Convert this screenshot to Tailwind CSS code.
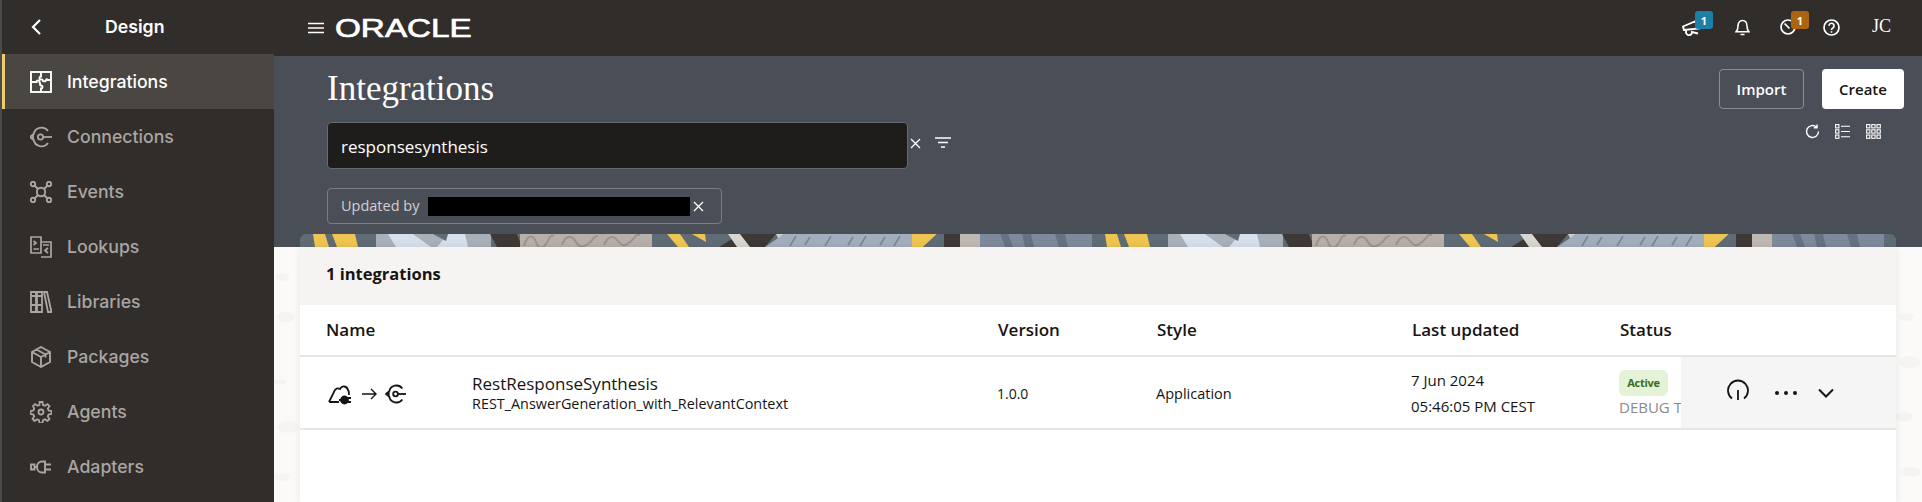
<!DOCTYPE html>
<html lang="en">
<head>
<meta charset="utf-8">
<title>Integrations</title>
<script src="https://cdn.jsdelivr.net/npm/@tailwindcss/browser@4"></script>
</head>
<body class="m-0 overflow-hidden bg-[#fbfaf8]">
<div class="flex h-[502px] w-[1922px] overflow-hidden font-['Open_Sans',sans-serif]">

  <!-- Sidebar -->
  <aside class="w-[274px] shrink-0 bg-[#312d2a] border-l-2 border-[#4a4a4a] font-['Inter',sans-serif] text-[17.7px] text-[#a9a6a3]">
    <div class="flex h-[54px] items-center">
      <svg class="ml-[28px] h-[18px] w-[12px] text-white" viewBox="0 0 12 18" fill="none" stroke="currentColor" stroke-width="2.2"><path d="M10 2 3 9l7 7"/></svg>
      <span class="ml-[63px] font-semibold text-white">Design</span>
    </div>
    <div class="flex h-[55px] items-center border-l-[3px] border-[#f0cc71] bg-[#4a4642] pl-[25px] pt-[1px] font-medium text-white">
      <svg class="h-[22px] w-[22px]" viewBox="0 0 22 22" fill="none" stroke="currentColor" stroke-width="1.900"><rect x="1" y="1" width="20" height="20"/><path d="M1 11h5.500c-.5-2 3.500-2 3 0-.3 1 .5 1.500 1.500 1.500M11 1v4.500c-2 -.3-2 3.500 0 3 1-.3 2 .5 2 1.500 1.500.5 3 .5 3-1 0-1 1-1 1.500 0H21M11 21v-3.500c2 .3 2-3.500 0-3-.8.2-1-.8-1-2"/></svg>
      <span class="ml-[15px]">Integrations</span>
    </div>
    <div class="flex h-[55px] items-center pl-[28px] pt-[1px] font-medium">
      <svg class="h-[22px] w-[22px]" viewBox="0 0 22 22" fill="none" stroke="currentColor" stroke-width="1.800"><path d="M18 5A8 8 0 0 0 3.600 8.500M3.600 13.500A8 8 0 0 0 18 17M0 11l3-2.500v5z"/><circle cx="10.500" cy="11" r="2.600"/><path d="M13 11h9"/></svg>
      <span class="ml-[15px]">Connections</span>
    </div>
    <div class="flex h-[55px] items-center pl-[28px] pt-[1px] font-medium">
      <svg class="h-[22px] w-[22px]" viewBox="0 0 22 22" fill="none" stroke="currentColor" stroke-width="1.900"><circle cx="11" cy="11" r="4.200"/><circle cx="3" cy="3" r="2.200"/><circle cx="19" cy="3" r="2.200"/><circle cx="3" cy="19" r="2.200"/><circle cx="19" cy="19" r="2.200"/><path d="m4.500 4.500 3.500 3.500M17.500 4.500 14 8M4.500 17.500 8 14M17.500 17.500 14 14"/></svg>
      <span class="ml-[15px]">Events</span>
    </div>
    <div class="flex h-[55px] items-center pl-[28px] pt-[1px] font-medium">
      <svg class="h-[22px] w-[22px]" viewBox="0 0 22 22" fill="none" stroke="currentColor" stroke-width="1.700"><path d="M1 1h10v16H1zM11 6h10v15H11"/><path d="m3.500 5 2.500 2-2.500 2M3.500 13H9M13 9h6M18 12l-3 2.500 3 2.500"/></svg>
      <span class="ml-[15px]">Lookups</span>
    </div>
    <div class="flex h-[55px] items-center pl-[28px] pt-[1px] font-medium">
      <svg class="h-[22px] w-[22px]" viewBox="0 0 22 22" fill="none" stroke="currentColor" stroke-width="1.800"><path d="M1 1h5v20H1zM7 1h5v20H7zM14 1l3-.2L21.500 21H18zM1 5h5M1 14h5M7 5h5M7 14h5"/></svg>
      <span class="ml-[15px]">Libraries</span>
    </div>
    <div class="flex h-[55px] items-center pl-[28px] pt-[1px] font-medium">
      <svg class="h-[22px] w-[22px]" viewBox="0 0 22 22" fill="none" stroke="currentColor" stroke-width="1.900"><path d="M11 1 20 6v10l-9 5-9-5V6zM2 6l9 5 9-5M11 11v10M6.500 3.500 15.500 8.500v3"/></svg>
      <span class="ml-[15px]">Packages</span>
    </div>
    <div class="flex h-[55px] items-center pl-[28px] pt-[1px] font-medium">
      <svg class="h-[22px] w-[22px]" viewBox="0 0 22 22" fill="none" stroke="currentColor" stroke-width="1.800"><circle cx="11" cy="11" r="2.500"/><path d="M9.500 1h3l.5 3 2 .8 2.500-1.700 2 2L17.800 7.500l.8 2 3 .5v3l-3 .5-.8 2 1.700 2.500-2 2-2.500-1.700-2 .8-.5 3h-3l-.5-3-2-.8-2.500 1.700-2-2 1.700-2.500-.8-2-3-.5v-3l3-.5.8-2L3 5.100l2-2 2.500 1.700 2-.8z"/></svg>
      <span class="ml-[15px]">Agents</span>
    </div>
    <div class="flex h-[55px] items-center pl-[28px] pt-[1px] font-medium">
      <svg class="h-[22px] w-[22px]" viewBox="0 0 22 22" fill="none" stroke="currentColor" stroke-width="1.900"><path d="M1 8.500h3.500v5H1zM4.500 11H7M7 11c0-3 2-5.500 5-5.500h3v11h-3c-3 0-5-2.500-5-5.500zM15 8.500h6M15 13.500h6"/></svg>
      <span class="ml-[15px]">Adapters</span>
    </div>
  </aside>

  <!-- Main -->
  <main class="relative flex min-w-0 flex-1 flex-col">
    <!-- Faint background texture -->
    <svg class="absolute left-0 top-[247px] h-[255px] w-full" viewBox="0 0 1648 255" fill="#f6f4f1">
      <ellipse cx="8" cy="30" rx="7" ry="4"/><ellipse cx="12" cy="70" rx="9" ry="5"/><ellipse cx="6" cy="135" rx="6" ry="3"/><ellipse cx="14" cy="180" rx="11" ry="6"/><ellipse cx="8" cy="230" rx="8" ry="4"/>
      <ellipse cx="1632" cy="70" rx="8" ry="4"/><ellipse cx="1636" cy="115" rx="11" ry="6"/><ellipse cx="1630" cy="170" rx="9" ry="5"/><ellipse cx="1637" cy="225" rx="10" ry="5"/>
    </svg>

    <!-- Top bar -->
    <header class="relative flex h-[56px] shrink-0 items-center bg-[#312d2a] text-white">
      <svg class="ml-[34px] h-[12px] w-[16px]" viewBox="0 0 16 12" fill="none" stroke="currentColor" stroke-width="1.600"><path d="M0 1.500h16M0 6h16M0 10.500h16"/></svg>
      <span class="ml-[11px] mt-[-1px] block origin-left scale-x-[1.330] font-['Liberation_Sans',sans-serif] text-[25px] leading-[30px] text-white [-webkit-text-stroke:0.7px_white]">ORACLE</span>

      <svg class="absolute left-[1408px] top-[20px] h-[16px] w-[19px]" viewBox="0 0 19 16" fill="none" stroke="currentColor" stroke-width="1.900"><path d="M1 6.500 2 10l15-1.500L14 1zM4.500 10.500a3 3 0 1 0 5.500 1.500l6 1.500"/></svg>
      <span class="absolute left-[1421px] top-[11px] flex h-[18px] w-[18px] items-center justify-center rounded-[3px] bg-[#1d7fa6] text-[11px] font-bold leading-none text-white">1</span>
      <svg class="absolute left-[1461px] top-[19px] h-[17px] w-[15px]" viewBox="0 0 15 17" fill="none" stroke="currentColor" stroke-width="1.600"><path d="M1 12.800h13c-1.500-1.500-2-2.500-2-5.500C12 4 10.500 1.500 7.500 1.500S3 4 3 7.300c0 3-.5 4-2 5.500zM5.500 15.500h4"/></svg>
      <svg class="absolute left-[1506px] top-[19px] h-[16px] w-[16px]" viewBox="0 0 16 16" fill="none" stroke="currentColor" stroke-width="1.700"><circle cx="8" cy="8" r="7"/><path d="m4.500 4.500 5 5"/></svg>
      <span class="absolute left-[1517px] top-[11px] flex h-[18px] w-[18px] items-center justify-center rounded-[3px] bg-[#ad6410] text-[11px] font-bold leading-none text-white">1</span>
      <svg class="absolute left-[1549px] top-[19px] h-[17px] w-[17px]" viewBox="0 0 17 17" fill="none" stroke="currentColor" stroke-width="1.700"><circle cx="8.500" cy="8.500" r="7.500"/><path d="M6 6.800a2.500 2.500 0 1 1 3.800 2.100c-.9.500-1.300 1-1.300 2"/><path d="M8.500 12.200v1.500"/></svg>
      <span class="absolute left-[1598px] top-[13px] font-['Liberation_Serif',serif] text-[18px] leading-[26px] text-white">JC</span>
    </header>

    <!-- Hero -->
    <section class="relative flex h-[191px] shrink-0 flex-col bg-[#4a4e57]">
      <div class="flex h-[178px] justify-between">
        <div class="pl-[53px] pt-[10px]">
          <h1 class="h-[46px] font-['Liberation_Serif',serif] text-[35px] leading-[46px] text-white">Integrations</h1>
          <div class="mt-[10px] flex items-center">
            <div class="flex h-[47px] w-[581px] items-center rounded-[4px] border border-[#66696e] bg-[#1f1d1b] pl-[13px] pt-[2px] text-[17px] text-white">responsesynthesis</div>
            <svg class="ml-[2px] mt-[-5px] h-[11px] w-[11px] text-white" viewBox="0 0 11 11" fill="none" stroke="currentColor" stroke-width="1.300"><path d="m1 1 9 9M10 1l-9 9"/></svg>
            <svg class="ml-[14px] mt-[-5px] h-[12px] w-[16px] text-white" viewBox="0 0 16 12" fill="none" stroke="currentColor" stroke-width="1.400"><path d="M0 1h16M3 5.500h10M6 10h4"/></svg>
          </div>
          <div class="mt-[19px] flex h-[36px] w-[395px] items-center rounded-[4px] border border-[#7b7e84] pl-[13px] text-[14.500px] text-[#cfd0d3]">
            <span class="w-[87px]">Updated by</span>
            <span class="h-[19px] w-[262px] bg-black"></span>
            <svg class="ml-[3px] h-[11px] w-[11px] text-white" viewBox="0 0 11 11" fill="none" stroke="currentColor" stroke-width="1.300"><path d="m1 1 9 9M10 1l-9 9"/></svg>
          </div>
        </div>
        <div class="flex flex-col items-end pr-[18px] pt-[13px]">
          <div class="flex gap-[18px] text-[15px] font-semibold">
            <span class="flex h-[40px] w-[85px] items-center justify-center rounded-[4px] border border-[#8a8d92] text-white">Import</span>
            <span class="flex h-[40px] w-[82px] items-center justify-center rounded-[4px] bg-white text-[#161513]">Create</span>
          </div>
          <div class="mr-[23px] mt-[15px] flex items-center text-white">
            <svg class="h-[15px] w-[15px]" viewBox="0 0 15 15" fill="none" stroke="currentColor" stroke-width="1.400"><path d="M13.500 7.500a6 6 0 1 1-2-4.500M12 .5v3.200H8.800"/></svg>
            <svg class="ml-[15px] h-[15px] w-[15px]" viewBox="0 0 15 15" fill="none" stroke="currentColor" stroke-width="1.100"><rect x=".6" y=".6" width="3.300" height="3.300"/><rect x=".6" y="5.800" width="3.300" height="3.300"/><rect x=".6" y="11" width="3.300" height="3.300"/><path d="M6 2.200h9M6 7.500h9M6 12.700h9"/></svg>
            <svg class="ml-[16px] h-[15px] w-[15px]" viewBox="0 0 15 15" fill="none" stroke="currentColor" stroke-width="1.100"><rect x=".6" y=".6" width="3.300" height="3.300"/><rect x="5.800" y=".6" width="3.300" height="3.300"/><rect x="11" y=".6" width="3.300" height="3.300"/><rect x=".6" y="5.800" width="3.300" height="3.300"/><rect x="5.800" y="5.800" width="3.300" height="3.300"/><rect x="11" y="5.800" width="3.300" height="3.300"/><rect x=".6" y="11" width="3.300" height="3.300"/><rect x="5.800" y="11" width="3.300" height="3.300"/><rect x="11" y="11" width="3.300" height="3.300"/></svg>
          </div>
        </div>
      </div>
      <!-- Decorative strip -->
      <svg class="mx-[26px] h-[13px] w-[1596px] rounded-t-[6px]" viewBox="0 0 1596 13" preserveAspectRatio="none">
        <defs>
          <pattern id="strip" width="792" height="13" patternUnits="userSpaceOnUse">
            <rect width="792" height="13" fill="#5f6c76"/>
            <path d="M13 0h12l4 13H15zM32 0h23l3 13H37z" fill="#eec550"/>
            <rect x="76" width="115" height="13" fill="#a9b0b9"/>
            <path d="M88 0h25l18 13H96zM148 0h17l3 13h-31z" fill="#d6dfeb"/>
            <path d="M133 0h15l-2 7z" fill="#5f6c76"/>
            <path d="M190 0h27l5 13h-25z" fill="#3e3936"/>
            <rect x="220" width="132" height="13" fill="#b6b0a9"/>
            <path d="M224 12c4-14 10-10 12-4s6 8 10 2 4-10 8-8M262 11c5-13 11-8 14-3s6 6 12 2 6-9 10-8M304 11c5-11 10-9 14-4s6 6 12 1 5-8 10-7" fill="none" stroke="#9a948e" stroke-width="2"/>
            <path d="M367 0h13l9 13h-11zM392 0h13l1 8z" fill="#eec550"/>
            <path d="M440 0h36l-11 13h-46z" fill="#3e3936"/>
            <path d="M428 0h12l10 13h-13z" fill="#d9d6d0"/>
            <path d="M476 0h8l-5 6z" fill="#cfccc6"/>
            <path d="M484 0h128v13H465z" fill="#a2aebd"/>
            <path d="M490 12l6-10M505 11l5-8M525 12l6-10M548 11l5-8M560 12l6-10M580 11l5-8M594 12l6-10" stroke="#7a8594" stroke-width="1.500" fill="none"/>
            <path d="M612 0h25l-14 13h-11z" fill="#eec550"/>
            <path d="M637 0h7v13h-21z" fill="#5f6c76"/>
            <rect x="644" width="16" height="13" fill="#3e3936"/>
            <rect x="660" width="20" height="13" fill="#bdb8b1"/>
            <rect x="680" width="112" height="13" fill="#7e8a9c"/>
            <path d="M700 0h8l5 13h-8zM722 0h9l3 13h-9zM755 0h10l3 13h-9z" fill="#66727f"/>
          </pattern>
        </defs>
        <rect width="1596" height="13" fill="url(#strip)"/>
      </svg>
    </section>

    <!-- Card -->
    <section class="relative mx-[26px] flex-1 shadow-[0_0_8px_rgba(0,0,0,0.08)]">
      <div class="flex h-[58px] items-center bg-[#f5f4f2] pb-[3px] pl-[26px] text-[16.500px] font-bold text-[#161513]">1 integrations</div>
      <div class="h-full bg-white text-[#161513]">
        <div class="grid h-[52px] grid-cols-[698px_159px_255px_208px_1fr] items-center border-b-2 border-[#e7e6e4] text-[17px] font-semibold">
          <span class="pl-[26px]">Name</span><span>Version</span><span>Style</span><span>Last updated</span><span>Status</span>
        </div>
        <div class="relative grid h-[73px] grid-cols-[172px_525px_159px_255px_208px_1fr] items-center border-b-2 border-[#e7e6e4] text-[15px]">
          <div class="flex items-center pl-[28px] pt-[2px]">
            <svg class="h-[22px] w-[24px]" viewBox="0 0 24 22" fill="none" stroke="#161513" stroke-width="1.800"><path d="M1 19 6 9c1-4 4-4 6-3 2-4 7-3 8 1 1 1 1 3 1 5M1 19h10"/><circle cx="16.500" cy="17" r="3.500" fill="#161513"/><path d="M11 17h3M19 15h4M19 19h4"/></svg>
            <svg class="ml-[10px] h-[12px] w-[15px]" viewBox="0 0 15 12" fill="none" stroke="#161513" stroke-width="1.400"><path d="M0 6h14M9 1l5 5-5 5"/></svg>
            <svg class="ml-[8px] h-[20px] w-[22px]" viewBox="0 0 22 22" fill="none" stroke="#161513" stroke-width="2"><path d="M18 5A8 8 0 0 0 3.600 8.500M3.600 13.500A8 8 0 0 0 18 17M0 11l3-2.500v5z"/><circle cx="10.500" cy="11" r="2.600"/><path d="M13 11h9"/></svg>
          </div>
          <div>
            <div class="text-[17px] leading-[22px]">RestResponseSynthesis</div>
            <div class="text-[14.400px] leading-[18px]">REST_AnswerGeneration_with_RelevantContext</div>
          </div>
          <div class="pt-[2px] text-[14px]">1.0.0</div>
          <div class="pt-[2px] text-[14.500px]">Application</div>
          <div class="leading-[26px]"><div>7 Jun 2024</div><div>05:46:05 PM CEST</div></div>
          <div class="mt-[2px]">
            <span class="flex h-[26px] w-[49px] items-center justify-center rounded-[6px] bg-[#e4f2d5] text-[11px] font-bold tracking-tight text-[#3d6b1f]">Active</span>
            <div class="mt-[1px] whitespace-nowrap text-[15px] leading-[20px] text-[#8b8a88]">DEBUG TRACE</div>
          </div>
          <!-- Row actions overlay -->
          <div class="absolute right-0 top-0 flex h-[71px] w-[215px] items-center bg-[#f5f5f5] pl-[46px] text-[#161513]">
            <svg class="mt-[-6px] h-[22px] w-[22px]" viewBox="0 0 22 22" fill="none" stroke="currentColor" stroke-width="1.800"><path d="M5 19.500a10 10 0 1 1 12 0M11 11v10"/></svg>
            <svg class="ml-[26px] h-[4px] w-[22px]" viewBox="0 0 22 4" fill="currentColor"><circle cx="2" cy="2" r="2"/><circle cx="11" cy="2" r="2"/><circle cx="20" cy="2" r="2"/></svg>
            <svg class="ml-[21px] mt-[1px] h-[10px] w-[16px]" viewBox="0 0 16 10" fill="none" stroke="currentColor" stroke-width="2"><path d="m1 1.500 7 7 7-7"/></svg>
          </div>
        </div>
      </div>
    </section>
  </main>
</div>
</body>
</html>
